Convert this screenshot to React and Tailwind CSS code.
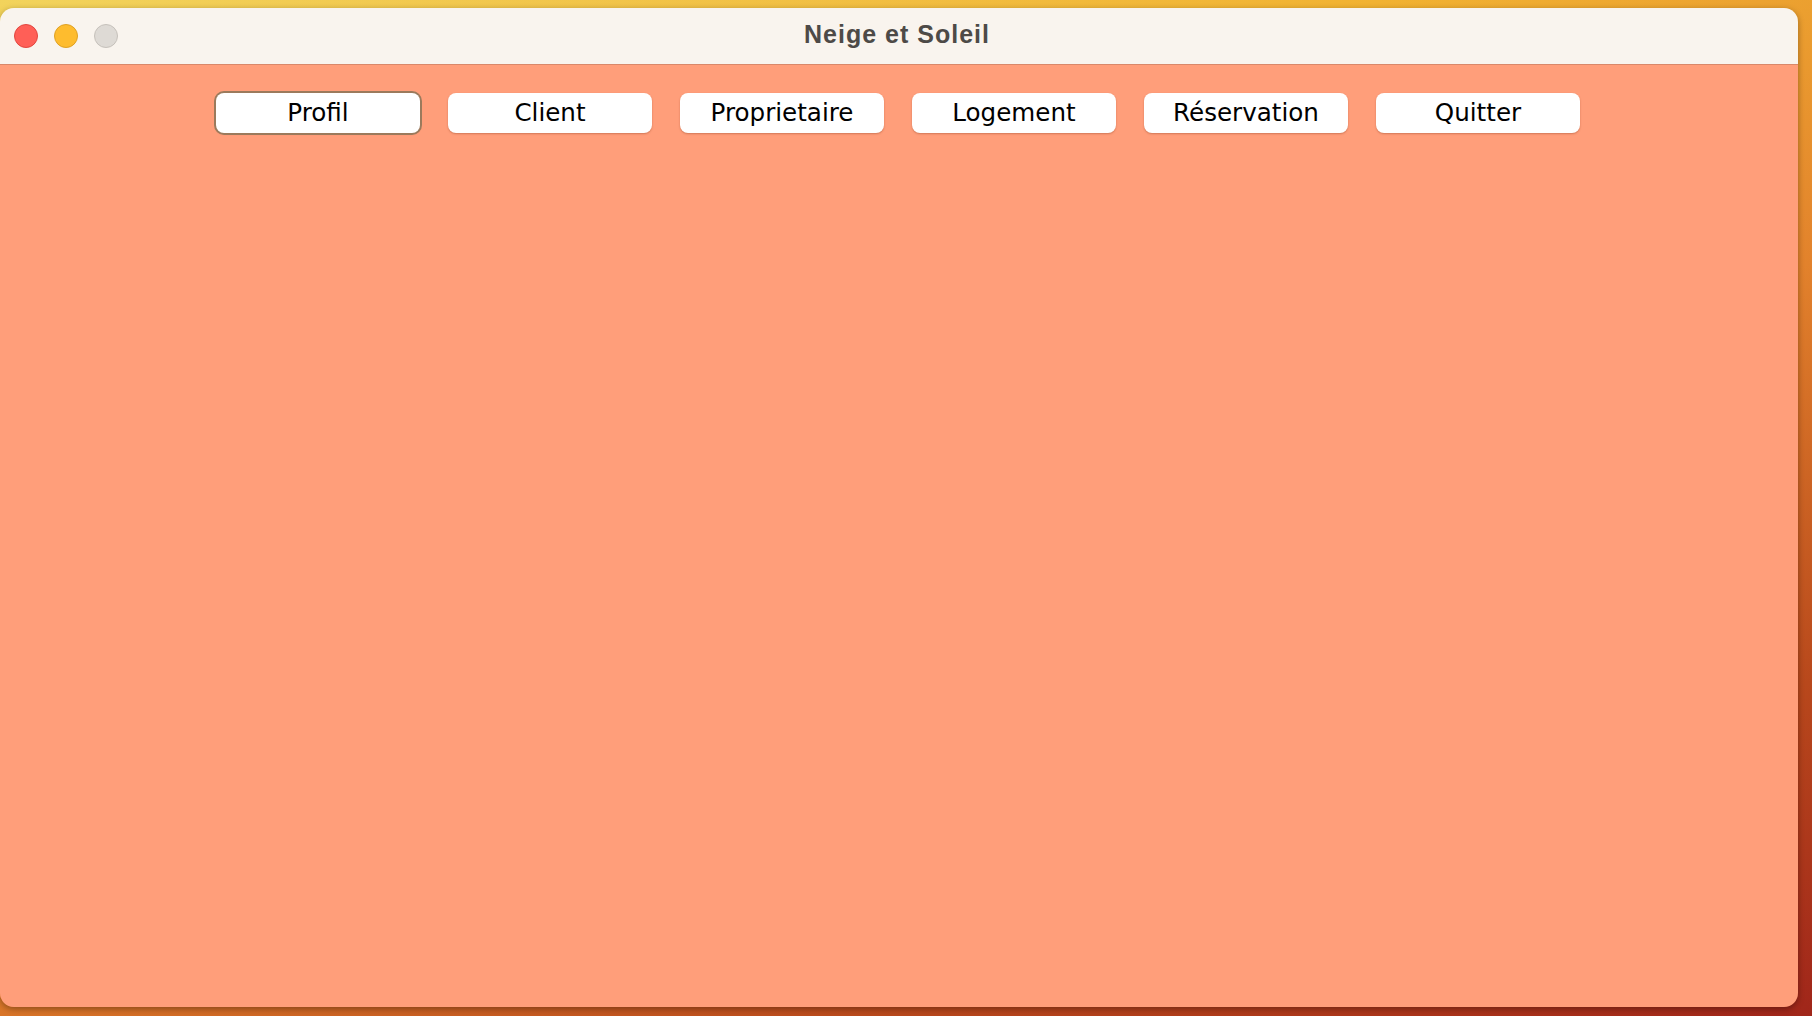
export default function App() {
  const buttons = ["Profil", "Client", "Proprietaire", "Logement", "Réservation", "Quitter"];
  return (
    <div className="w-[1812px] h-[1016px] overflow-hidden bg-[linear-gradient(160deg,#f2d35c_0%,#f1b232_30%,#e2822c_55%,#b8481c_80%,#a0261a_100%)] pt-[8px] pr-[14px] pb-[9px]">
      <div className="w-[1798px] h-[999px] rounded-[14px] overflow-hidden flex flex-col shadow-[0_2px_6px_rgba(0,0,0,0.35)]">
        <div className="relative h-[57px] shrink-0 bg-[#f9f4ee] border-b border-[#d9886a] flex items-center justify-center">
          <div className="absolute left-[14px] top-[16px] flex gap-[16px]">
            <span className="w-[24px] h-[24px] rounded-full bg-[#ff5f57] border border-[#e2463f]" />
            <span className="w-[24px] h-[24px] rounded-full bg-[#febc2e] border border-[#dfa123]" />
            <span className="w-[24px] h-[24px] rounded-full bg-[#dedad5] border border-[#c6c1bb]" />
          </div>
          <span className="text-[25px] font-bold tracking-[1px] text-[#4d4a47] font-['Liberation_Sans',Arial,sans-serif] mt-[-2px] mr-[4px]">
            Neige et Soleil
          </span>
        </div>
        <div className="flex-1 bg-[#ff9e7a] pt-[28px]">
          <div className="flex justify-center gap-[28px] pr-[2px]">
            {buttons.map((b, i) => (
              <button
                key={b}
                className={
                  "w-[204px] h-[40px] rounded-[8px] bg-white text-black text-[24.6px] leading-none font-['DejaVu_Sans',sans-serif] flex items-center justify-center shadow-[0_1px_2px_rgba(120,50,20,0.35)] " +
                  (i === 0 ? "ring-2 ring-[#9b7a5c]" : "")
                }
              >
                {b}
              </button>
            ))}
          </div>
        </div>
      </div>
    </div>
  );
}
